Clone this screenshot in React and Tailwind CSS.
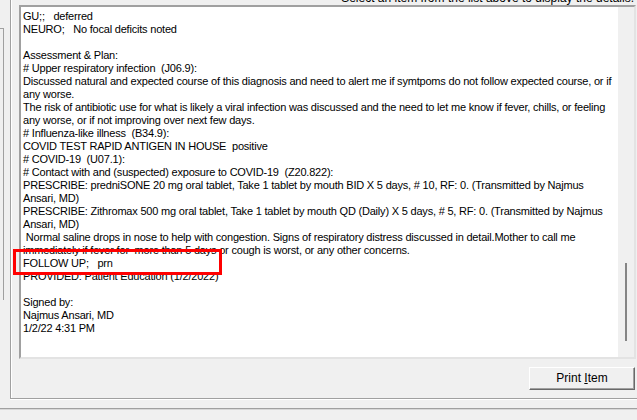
const NOTE_LINES = [
  'GU;;   deferred',
  'NEURO;   No focal deficits noted',
  '',
  'Assessment & Plan:',
  '# Upper respiratory infection  (J06.9):',
  'Discussed natural and expected course of this diagnosis and need to alert me if symtpoms do not follow expected course, or if',
  'any worse.',
  'The risk of antibiotic use for what is likely a viral infection was discussed and the need to let me know if fever, chills, or feeling',
  'any worse, or if not improving over next few days.',
  '# Influenza-like illness  (B34.9):',
  'COVID TEST RAPID ANTIGEN IN HOUSE  positive',
  '# COVID-19  (U07.1):',
  '# Contact with and (suspected) exposure to COVID-19  (Z20.822):',
  'PRESCRIBE: predniSONE 20 mg oral tablet, Take 1 tablet by mouth BID X 5 days, # 10, RF: 0. (Transmitted by Najmus',
  'Ansari, MD)',
  'PRESCRIBE: Zithromax 500 mg oral tablet, Take 1 tablet by mouth QD (Daily) X 5 days, # 5, RF: 0. (Transmitted by Najmus',
  'Ansari, MD)',
  ' Normal saline drops in nose to help with congestion. Signs of respiratory distress discussed in detail.Mother to call me',
  'immediately if fever for  more than 5 days or cough is worst, or any other concerns.',
  'FOLLOW UP;   prn',
  'PROVIDED: Patient Education (1/2/2022)',
  '',
  'Signed by:',
  'Najmus Ansari, MD',
  '1/2/22 4:31 PM',
];

export default function App() {
  return (
    <div className="relative w-[637px] h-[420px] overflow-hidden bg-[#f0f0f0] font-['Liberation_Sans',Arial,sans-serif] text-black">
      <div className="flex h-[399px]">
        {/* edge of the list pane on the left */}
        <div className="w-[4px] pt-[28px]">
          <div className="h-[272px] border-t border-r border-[#a0a0a0]" />
        </div>
        <div className="w-[6px]" />

        {/* details group box */}
        <div className="flex-1 flex flex-col border-l border-b border-[#a0a0a0] shadow-[inset_1px_0_0_#fff,0_1px_0_#fff] pl-[8px]">
          <div className="h-[5px] overflow-hidden flex justify-end items-end pr-[3px]">
            <span className="text-[12px] leading-[13px] whitespace-nowrap">
              Select an item from the list above to display the details.
            </span>
          </div>

          <NoteBox />

          <div className="flex justify-end pt-[8px] pr-[2px]">
            <button className="w-[106px] h-[23px] bg-[#f0f0f0] border border-t-white border-l-white border-r-[#696969] border-b-[#696969] shadow-[inset_-1px_-1px_0_#a0a0a0] text-[12px] leading-[13px]">
              Print <span className="underline">I</span>tem
            </button>
          </div>
        </div>
      </div>

      <div className="mt-[9px] h-[2px] border-t border-[#a0a0a0] bg-[#d8d8d8]" />

      {/* red highlight drawn over the note */}
      <div className="absolute left-[13px] top-[249px] w-[209px] h-[26px] border-[3px] border-[#ff0000]" />
    </div>
  );
}

function NoteBox() {
  return (
    <div className="w-[617px] h-[354px] flex border-2 border-t-[#a0a0a0] border-l-[#a0a0a0] border-r-[#e3e3e3] border-b-[#e3e3e3] shadow-[inset_1px_1px_0_#696969]">
      <div className="flex-1 bg-white pl-[2px] pt-[3px] text-[11px] leading-[13px] tracking-[-0.2px]">
        {NOTE_LINES.map((line, i) => (
          <div key={i} className="h-[13px] whitespace-pre">
            {line}
          </div>
        ))}
      </div>
      <div className="w-[16px] bg-[#f0f0f0] pl-[7px] pt-[256px]">
        <div className="w-[2px] h-[78px] bg-[#858585]" />
      </div>
    </div>
  );
}
